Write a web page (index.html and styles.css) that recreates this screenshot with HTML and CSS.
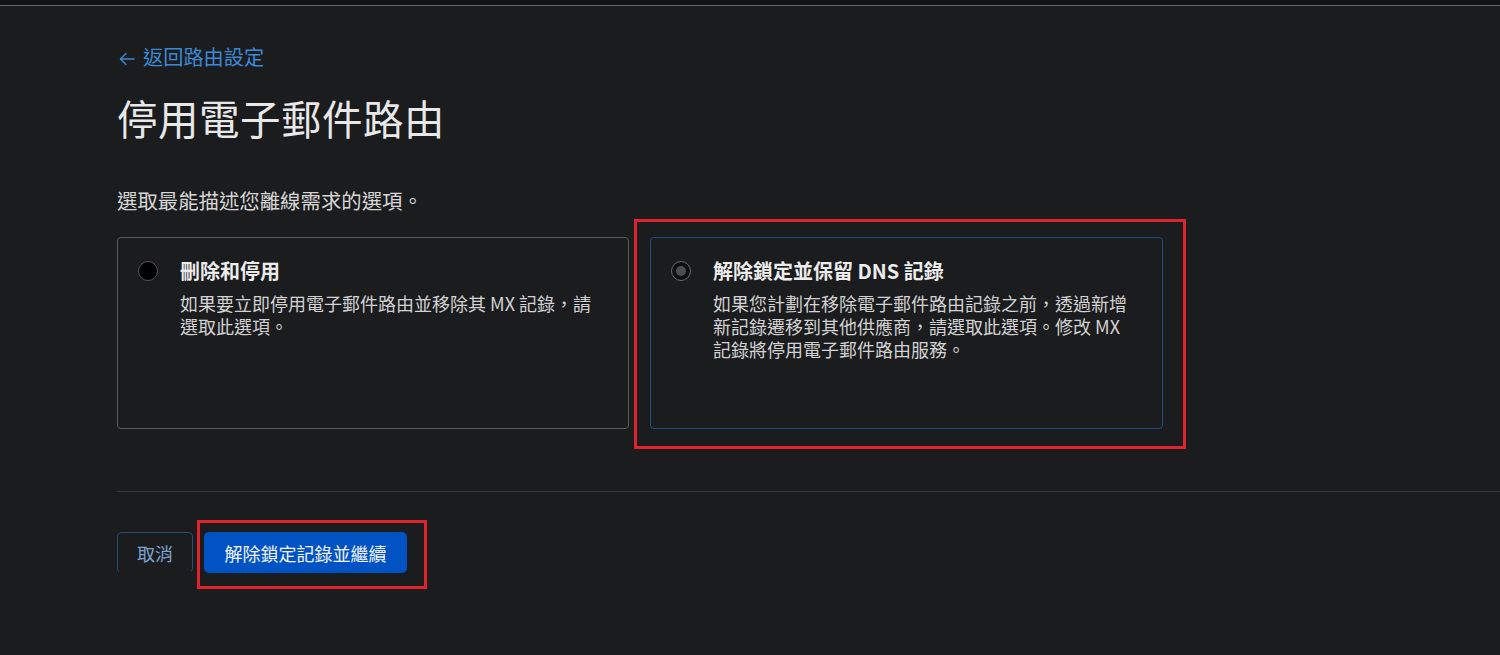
FILE: index.html
```html
<!DOCTYPE html>
<html lang="zh-Hant">
<head>
    <meta charset="UTF-8">
    <meta name="viewport" content="width=device-width, initial-scale=1.0">
    <title>停用電子郵件路由</title>
    <link rel="stylesheet" href="styles.css">
</head>
<body>

    <div class="topbar"></div>

    <main class="page">
        <a class="back-link" href="#">
            <svg class="back-arrow" width="16" height="14" viewBox="0 0 16 14" fill="none" stroke="currentColor" stroke-width="1.4" stroke-linecap="round" stroke-linejoin="round">
                <path d="M15 7H1.5"/>
                <path d="M7 1.5L1.5 7L7 12.5"/>
            </svg>
            <span>返回路由設定</span>
        </a>

        <h1 class="page-title">停用電子郵件路由</h1>

        <p class="lead">選取最能描述您離線需求的選項。</p>

        <div class="options">
            <label class="option">
                <span class="radio"></span>
                <span class="option-body">
                    <span class="option-title">刪除和停用</span>
                    <span class="option-desc">如果要立即停用電子郵件路由並移除其 MX 記錄，請選取此選項。</span>
                </span>
            </label>

            <label class="option selected marked">
                <span class="radio checked"></span>
                <span class="option-body">
                    <span class="option-title">解除鎖定並保留 DNS 記錄</span>
                    <span class="option-desc">如果您計劃在移除電子郵件路由記錄之前，透過新增新記錄遷移到其他供應商，請選取此選項。修改 MX 記錄將停用電子郵件路由服務。</span>
                </span>
            </label>
        </div>

        <hr class="divider">

        <div class="actions">
            <button class="btn btn-outline" type="button">取消</button>
            <span class="mark-wrap">
                <button class="btn btn-primary" type="button">解除鎖定記錄並繼續</button>
            </span>
        </div>
    </main>

</body>
</html>
```

FILE: styles.css
```css
body {
    margin: 0;
    background-color: #1b1c1e;
    color: #e4e4e4;
    font-family: "Noto Sans CJK TC", "Noto Sans", sans-serif;
}

.topbar {
    height: 5px;
    background-color: #121314;
    border-bottom: 1px solid #6a6a6a;
}

.page {
    padding: 37px 0 80px 117px;
}

.back-link {
    display: inline-flex;
    align-items: center;
    gap: 8px;
    height: 28px;
    color: #3b8ad6;
    text-decoration: none;
    font-size: 20.2px;
    line-height: 28px;
}

.back-arrow {
    margin-left: 2px;
    margin-top: 3px;
}

.page-title {
    margin: 21px 0 0;
    font-size: 40.5px;
    font-weight: 400;
    line-height: 52px;
    color: #e8e8e8;
    letter-spacing: 0.5px;
}

.lead {
    margin: 42px 0 0;
    font-size: 20.4px;
    line-height: 28px;
    color: #d6d6d6;
}

/* 兩個選項卡片 */
.options {
    display: grid;
    grid-template-columns: 512px 513px;
    gap: 21px;
    margin-top: 23px;
}

.option {
    position: relative;
    display: flex;
    align-items: flex-start;
    gap: 22px;
    height: 192px;
    box-sizing: border-box;
    padding: 21px 20px 0 20px;
    border: 1px solid #5a5a5a;
    border-radius: 4px;
    cursor: pointer;
}

.option.selected {
    border-color: #1d4c86;
}

.radio {
    flex: none;
    width: 20px;
    height: 20px;
    margin-top: 2px;
    box-sizing: border-box;
    border: 1px solid #555;
    border-radius: 50%;
    background: #000;
    display: flex;
    align-items: center;
    justify-content: center;
}

.radio.checked {
    background: #0e0f10;
    border-color: #6a6a6a;
}

.radio.checked::after {
    content: "";
    width: 10px;
    height: 10px;
    border-radius: 50%;
    background: #4d4d4f;
}

.option-body {
    display: flex;
    flex-direction: column;
    width: 425px;
}

.option-title {
    font-size: 20px;
    font-weight: 700;
    line-height: 24px;
    color: #ececec;
}

.option-desc {
    margin-top: 9px;
    font-size: 18px;
    line-height: 23px;
    color: #d2d2d2;
}

.divider {
    margin: 62px 0 0;
    border: none;
    border-top: 1px solid #38393b;
}

.actions {
    display: flex;
    gap: 11px;
    margin-top: 40px;
}

.btn {
    height: 41px;
    border-radius: 5px;
    font-family: inherit;
    font-size: 18px;
    cursor: pointer;
}

.btn-outline {
    width: 76px;
    padding: 0;
    background: transparent;
    color: #7ba3d1;
    border: 1px solid #2b4c74;
    border-bottom-color: #1b1c1e;
}

.btn-primary {
    width: 203px;
    padding: 0;
    background: #0152c3;
    color: #f2f4f8;
    border: none;
}

/* 紅色標註框 */
.mark-wrap {
    position: relative;
    display: block;
}

.mark-wrap::after,
.marked::after {
    content: "";
    position: absolute;
    border: 3px solid #e0222c;
    pointer-events: none;
}

.marked::after {
    top: -19px;
    left: -17px;
    right: -24px;
    bottom: -21px;
}

.mark-wrap::after {
    top: -12px;
    left: -7px;
    right: -20px;
    bottom: -16px;
}
```
